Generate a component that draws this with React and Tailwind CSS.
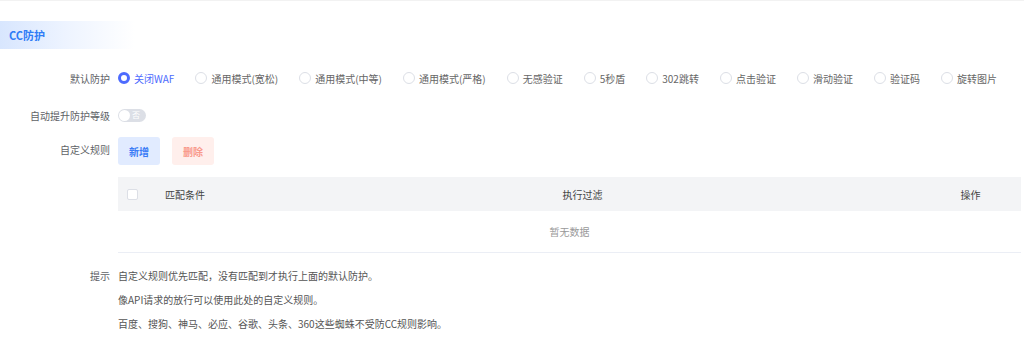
import { useState } from "react";

const modes = [
    "关闭WAF",
    "通用模式(宽松)",
    "通用模式(中等)",
    "通用模式(严格)",
    "无感验证",
    "5秒盾",
    "302跳转",
    "点击验证",
    "滑动验证",
    "验证码",
    "旋转图片",
];

function Radio({ label, checked, onClick }) {
    return (
        <label className="flex items-center mr-[21px] whitespace-nowrap cursor-pointer" onClick={onClick}>
            {checked ? (
                <span className="w-3 h-3 rounded-full border-[3px] border-[#4d6bfe] bg-white shrink-0" />
            ) : (
                <span className="w-3 h-3 rounded-full border border-[#dcdfe6] bg-white shrink-0" />
            )}
            <span className={"ml-[4px] " + (checked ? "text-[#4d6bfe]" : "text-[#666]")}>{label}</span>
        </label>
    );
}

function Row({ label, children, className, labelClass }) {
    return (
        <div className={"flex " + (className || "")}>
            <div className={"w-[110px] shrink-0 text-right text-[#606266] whitespace-nowrap " + (labelClass || "")}>{label}</div>
            <div className="ml-2 flex-1">{children}</div>
        </div>
    );
}

export default function App() {
    const [mode, setMode] = useState(0);
    const [auto, setAuto] = useState(false);

    return (
        <div
            className="w-[1024px] h-[352px] bg-white text-[10px] border-t border-[#f2f2f2] overflow-hidden"
            style={{ fontFamily: '"Noto Sans CJK SC", "Noto Sans", sans-serif' }}
        >
            <div className="mt-[20px] h-[28px] w-[135px] flex items-center pl-[9px] bg-gradient-to-r from-[#d8e6fe] via-[#eef4ff] to-white text-[11px] font-bold text-[#2f7cf6]">
                CC防护
            </div>

            <Row label="默认防护" className="mt-[20px] items-center h-[18px]">
                <div className="flex items-center">
                    {modes.map((m, i) => (
                        <Radio key={m} label={m} checked={mode === i} onClick={() => setMode(i)} />
                    ))}
                </div>
            </Row>

            <Row label="自动提升防护等级" className="mt-[19px] items-center h-[18px]">
                <button
                    onClick={() => setAuto(!auto)}
                    className={"relative flex items-center w-[28px] h-[13px] rounded-full " + (auto ? "bg-[#4d6bfe]" : "bg-[#dcdfe6]")}
                >
                    <span className={"absolute top-[1px] w-[11px] h-[11px] rounded-full bg-white " + (auto ? "left-[16px]" : "left-[1px]")} />
                    <span className={"absolute text-[8px] leading-none text-white " + (auto ? "left-[4px]" : "left-[14px]")}>
                        {auto ? "是" : "否"}
                    </span>
                </button>
            </Row>

            <Row label="自定义规则" className="mt-[13px] items-start" labelClass="leading-[26px]">
                <div className="flex gap-3">
                    <button className="w-[42px] h-[28px] rounded-[3px] bg-[#e1ebff] text-[#3a7cf6] font-bold">新增</button>
                    <button className="w-[42px] h-[28px] rounded-[3px] bg-[#ffefec] text-[#f99a8c] font-bold">删除</button>
                </div>
                <div className="mt-[12px] w-[903px]">
                    <div className="flex items-center h-[34px] bg-[#f3f4f6] text-[#444]">
                        <div className="w-[47px] pl-[9px]">
                            <span className="block w-[11px] h-[11px] border border-[#dcdfe6] rounded-[2px] bg-white" />
                        </div>
                        <div className="w-[300px]">匹配条件</div>
                        <div className="w-[235px] text-center">执行过滤</div>
                        <div className="flex-1" />
                        <div className="w-[101px] text-center">操作</div>
                    </div>
                    <div className="h-[42px] flex items-center justify-center border-b border-[#ebeef5] text-[#999]">
                        暂无数据
                    </div>
                </div>
            </Row>

            <Row label="提示" className="mt-[11px] items-start" labelClass="leading-[24px]">
                <div className="text-[#555] leading-[24px]">
                    <div>自定义规则优先匹配，没有匹配到才执行上面的默认防护。</div>
                    <div>像API请求的放行可以使用此处的自定义规则。</div>
                    <div>百度、搜狗、神马、必应、谷歌、头条、360这些蜘蛛不受防CC规则影响。</div>
                </div>
            </Row>
        </div>
    );
}
